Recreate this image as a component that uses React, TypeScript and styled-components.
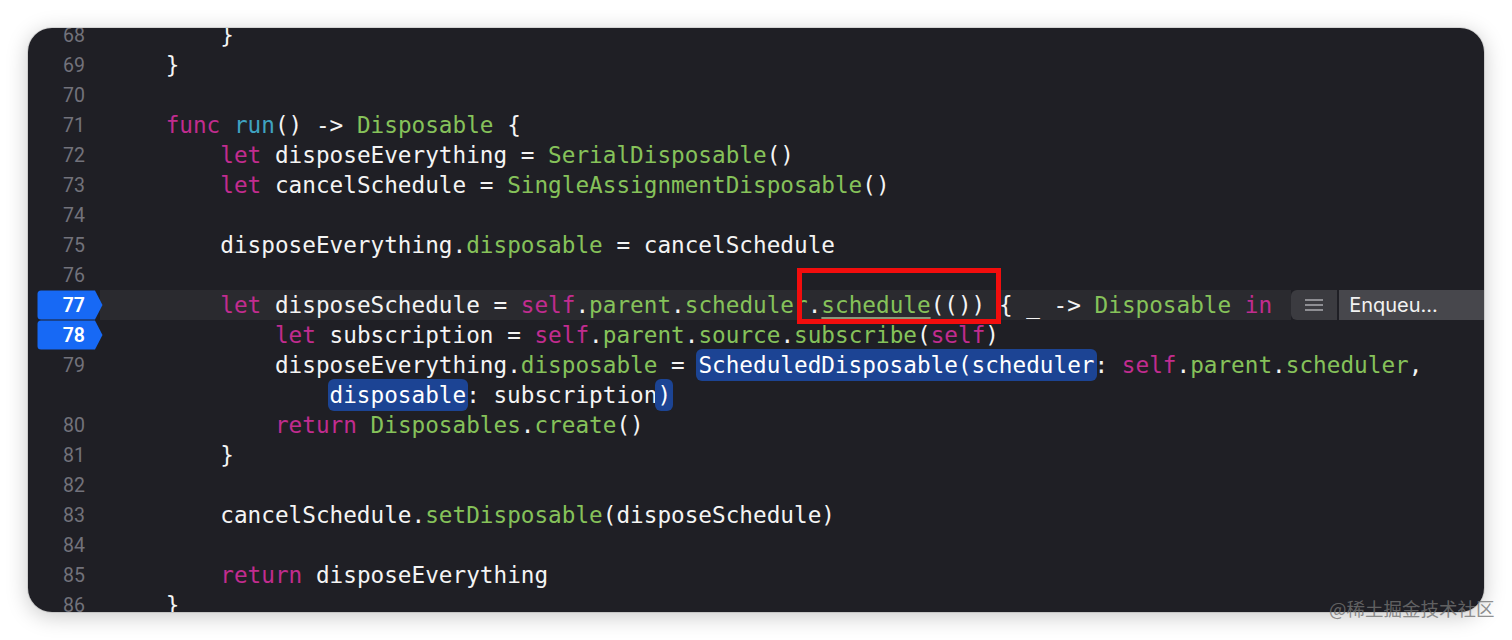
import React from "react";
import styled, { createGlobalStyle } from "styled-components";

const Global = createGlobalStyle`
  html, body { margin: 0; padding: 0; background: #ffffff; }
  body { width: 1512px; height: 640px; overflow: hidden; }
`;

const Page = styled.div`
  position: relative;
  width: 1512px;
  height: 640px;
  padding: 28px 0 0 28px;
  box-sizing: border-box;
  background: #ffffff;
`;

const Window = styled.div`
  position: relative;
  width: 1456px;
  height: 584px;
  border-radius: 24px;
  background: #1f1f25;
  overflow: hidden;
  box-shadow: 0 0 0 1px rgba(0, 0, 0, 0.1), 0 4px 22px rgba(0, 0, 0, 0.22);
`;

const Code = styled.div`
  display: flex;
  flex-direction: column;
  margin-top: -8px;
`;

const Row = styled.div`
  display: flex;
  height: 30px;
  align-items: stretch;
`;

const Gutter = styled.div`
  position: relative;
  flex: 0 0 72px;
  display: flex;
  align-items: center;
  justify-content: flex-end;
  padding-right: 15px;
  box-sizing: border-box;
`;

const LineNo = styled.span<{ $bp?: boolean }>`
  position: relative;
  z-index: 1;
  font-family: Roboto, "Liberation Sans", sans-serif;
  font-size: 19.5px;
  font-weight: ${(p) => (p.$bp ? 600 : 400)};
  color: ${(p) => (p.$bp ? "#ffffff" : "#72727b")};
`;

const Breakpoint = styled.svg`
  position: absolute;
  left: 9px;
  top: 0;
  width: 66px;
  height: 30px;
`;

const CodeCell = styled.div<{ $current?: boolean }>`
  flex: 1;
  display: flex;
  align-items: center;
  padding-left: 11px;
  background: ${(p) => (p.$current ? "#2a2a2f" : "transparent")};
  white-space: pre;
  font-family: "DejaVu Sans Mono", "Liberation Mono", monospace;
  font-size: 22.7px;
  line-height: 30px;
  color: #f4f4f4;
`;

const Tok = styled.span<{ $k: string }>`
  color: ${(p) =>
    p.$k === "k"
      ? "#c12c8f"
      : p.$k === "t"
      ? "#3fa3c2"
      : p.$k === "g" || p.$k === "u"
      ? "#86c25a"
      : "#f4f4f4"};
  ${(p) =>
    p.$k === "u"
      ? `text-decoration: underline; text-decoration-color: #8a9a7c; text-decoration-thickness: 2px; text-underline-offset: 4px;`
      : ""}
  ${(p) =>
    p.$k === "s"
      ? `background: #1c4494; border-radius: 6px; padding: 3px 2px; margin: 0 -2px; color: #ffffff;`
      : ""}
`;

const Annotation = styled.div`
  display: flex;
  align-self: stretch;
  margin-left: 19px;
  flex: 1;
  gap: 2px;
  background: #1f1f25;
`;

const IconBox = styled.div`
  flex: 0 0 46px;
  display: flex;
  align-items: center;
  justify-content: center;
  background: #3b3b40;
  border-radius: 6px 0 0 6px;
`;

const LabelBox = styled.div`
  flex: 1;
  display: flex;
  align-items: center;
  padding-left: 10px;
  background: #47474c;
  font-family: Inter, "Liberation Sans", sans-serif;
  font-size: 20px;
  color: #f2f2f2;
`;

const RedBox = styled.div`
  position: absolute;
  left: 769px;
  top: 240px;
  width: 204px;
  height: 56px;
  box-sizing: border-box;
  border: 5px solid #f20d0d;
  pointer-events: none;
`;

const Watermark = styled.div`
  position: absolute;
  left: 1329px;
  top: 595px;
  font-family: "Noto Sans CJK SC", "Noto Sans", sans-serif;
  font-size: 18.5px;
  color: rgba(115, 115, 115, 0.8);
  white-space: nowrap;
`;

type T = [string, string];
type Line = { n?: number; bp?: boolean; current?: boolean; toks: T[] };

const sp = (n: number): T => [" ".repeat(n), "p"];

const lines: Line[] = [
  { n: 68, toks: [sp(8), ["}", "p"]] },
  { n: 69, toks: [sp(4), ["}", "p"]] },
  { n: 70, toks: [] },
  {
    n: 71,
    toks: [sp(4), ["func", "k"], [" ", "p"], ["run", "t"], ["() -> ", "p"], ["Disposable", "g"], [" {", "p"]],
  },
  {
    n: 72,
    toks: [sp(8), ["let", "k"], [" disposeEverything = ", "p"], ["SerialDisposable", "g"], ["()", "p"]],
  },
  {
    n: 73,
    toks: [sp(8), ["let", "k"], [" cancelSchedule = ", "p"], ["SingleAssignmentDisposable", "g"], ["()", "p"]],
  },
  { n: 74, toks: [] },
  {
    n: 75,
    toks: [sp(8), ["disposeEverything.", "p"], ["disposable", "g"], [" = cancelSchedule", "p"]],
  },
  { n: 76, toks: [] },
  {
    n: 77,
    bp: true,
    current: true,
    toks: [
      sp(8),
      ["let", "k"],
      [" disposeSchedule = ", "p"],
      ["self", "k"],
      [".", "p"],
      ["parent", "g"],
      [".", "p"],
      ["scheduler", "g"],
      [".", "p"],
      ["schedule", "u"],
      ["(()) { _ -> ", "p"],
      ["Disposable", "g"],
      [" ", "p"],
      ["in", "k"],
    ],
  },
  {
    n: 78,
    bp: true,
    toks: [
      sp(12),
      ["let", "k"],
      [" subscription = ", "p"],
      ["self", "k"],
      [".", "p"],
      ["parent", "g"],
      [".", "p"],
      ["source", "g"],
      [".", "p"],
      ["subscribe", "g"],
      ["(", "p"],
      ["self", "k"],
      [")", "p"],
    ],
  },
  {
    n: 79,
    toks: [
      sp(12),
      ["disposeEverything.", "p"],
      ["disposable", "g"],
      [" = ", "p"],
      ["ScheduledDisposable(scheduler", "s"],
      [": ", "p"],
      ["self", "k"],
      [".", "p"],
      ["parent", "g"],
      [".", "p"],
      ["scheduler", "g"],
      [",", "p"],
    ],
  },
  {
    toks: [sp(16), ["disposable", "s"], [": subscription", "p"], [")", "s"]],
  },
  {
    n: 80,
    toks: [sp(12), ["return", "k"], [" ", "p"], ["Disposables", "g"], [".", "p"], ["create", "g"], ["()", "p"]],
  },
  { n: 81, toks: [sp(8), ["}", "p"]] },
  { n: 82, toks: [] },
  {
    n: 83,
    toks: [sp(8), ["cancelSchedule.", "p"], ["setDisposable", "g"], ["(disposeSchedule)", "p"]],
  },
  { n: 84, toks: [] },
  { n: 85, toks: [sp(8), ["return", "k"], [" disposeEverything", "p"]] },
  { n: 86, toks: [sp(4), ["}", "p"]] },
];

const BreakpointShape = () => (
  <Breakpoint viewBox="0 0 66 30">
    <path d="M4 0.5 H58 L65.5 15 L58 29.5 H4 Q0.5 29.5 0.5 26 V4 Q0.5 0.5 4 0.5 Z" fill="#1769f5" />
  </Breakpoint>
);

const MenuIcon = () => (
  <svg width="18" height="14" viewBox="0 0 18 14">
    <rect x="0" y="1" width="18" height="2" fill="#8e8e93" />
    <rect x="0" y="6" width="18" height="2" fill="#8e8e93" />
    <rect x="0" y="11" width="18" height="2" fill="#8e8e93" />
  </svg>
);

export default function App() {
  return (
    <>
      <Global />
      <Page>
        <Window>
          <Code>
            {lines.map((l, i) => (
              <Row key={i}>
                <Gutter>
                  {l.bp && <BreakpointShape />}
                  {l.n !== undefined && <LineNo $bp={l.bp}>{l.n}</LineNo>}
                </Gutter>
                <CodeCell $current={l.current}>
                  <span>
                    {l.toks.map((t, j) => (
                      <Tok key={j} $k={t[1]}>
                        {t[0]}
                      </Tok>
                    ))}
                  </span>
                  {l.current && (
                    <Annotation>
                      <IconBox>
                        <MenuIcon />
                      </IconBox>
                      <LabelBox>Enqueu...</LabelBox>
                    </Annotation>
                  )}
                </CodeCell>
              </Row>
            ))}
          </Code>
          <RedBox />
        </Window>
        <Watermark>@稀土掘金技术社区</Watermark>
      </Page>
    </>
  );
}
